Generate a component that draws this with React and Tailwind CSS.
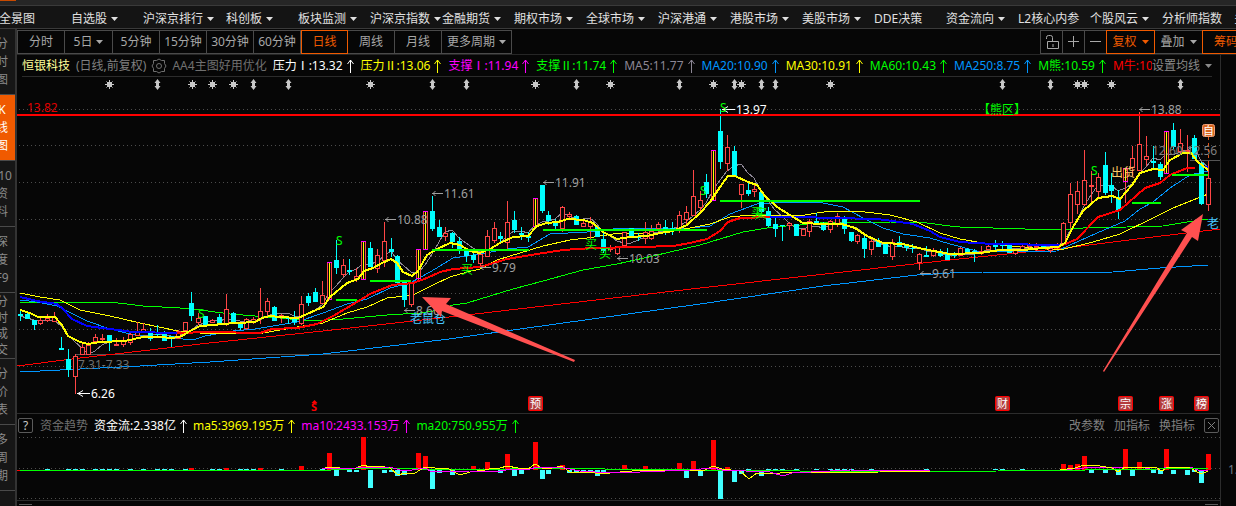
const MENU = [
  { label: '全景图' },
  { label: '自选股', more: true },
  { label: '沪深京排行', more: true, wide: true },
  { label: '科创板', more: true },
  { label: '板块监测', more: true },
  { label: '沪深京指数', more: true },
  { label: '金融期货', more: true },
  { label: '期权市场', more: true },
  { label: '全球市场', more: true },
  { label: '沪深港通', more: true },
  { label: '港股市场', more: true },
  { label: '美股市场', more: true },
  { label: 'DDE决策' },
  { label: '资金流向', more: true },
  { label: 'L2核心内参' },
  { label: '个股风云', more: true },
  { label: '分析师指数' },
  { label: '多空资金' },
]

const PERIODS = [
  { label: '分时', width: 'w-[47px]' },
  { label: '5日', width: 'w-12', more: true },
  { label: '5分钟', width: 'w-[47px]' },
  { label: '15分钟', width: 'w-[47px]' },
  { label: '30分钟', width: 'w-[47px]' },
  { label: '60分钟', width: 'w-[47px]' },
  { label: '日线', width: 'w-[47px]', active: true },
  { label: '周线', width: 'w-[47px]' },
  { label: '月线', width: 'w-[47px]' },
  { label: '更多周期', width: 'w-[70px]', more: true },
]

const SIDE_TABS = [
  { chars: ['分', '时', '图'] },
  { chars: ['K', '线', '图'], active: true },
  { chars: ['F10', '资', '料'] },
  { chars: ['深', '度', 'F9'] },
  { chars: ['分', '时', '成', '交'] },
  { chars: ['分', '价', '表'] },
  { chars: ['多', '周', '期'] },
]

const INDICATORS = [
  { label: '压力Ⅰ:13.32', color: 'text-white' },
  { label: '压力Ⅱ:13.06', color: 'text-[#ffff00]' },
  { label: '支撑Ⅰ:11.94', color: 'text-[#ff00ff]' },
  { label: '支撑Ⅱ:11.74', color: 'text-[#00ff00]' },
  { label: 'MA5:11.77', color: 'text-[#8c8694]' },
  { label: 'MA20:10.90', color: 'text-[#0096ff]' },
  { label: 'MA30:10.91', color: 'text-[#ffff00]' },
  { label: 'MA60:10.43', color: 'text-[#00ff00]' },
  { label: 'MA250:8.75', color: 'text-[#0096ff]' },
  { label: 'M熊:10.59', color: 'text-[#00ff00]' },
  { label: 'M牛:10.82', color: 'text-[#ff0000]' },
]

const FLOW_INDICATORS = [
  { label: '资金流:2.338亿', color: 'text-white' },
  { label: 'ma5:3969.195万', color: 'text-[#ffff00]' },
  { label: 'ma10:2433.153万', color: 'text-[#ff00ff]' },
  { label: 'ma20:750.955万', color: 'text-[#00ff00]' },
]

// kind, high, body top, body bottom, low. c = down, r = up, m = limit up
const CANDLES = `
c 310 314 316 321|c 313 314 319 319|c 320 320 325 330|r 318 320 324 325|r 314 318 321 322|r 312 317 322 322
c 337 348 350 350|c 349 359 370 377|r 354 356 377 394|r 343 347 355 355|r 342 345 355 355|r 334 337 342 342
r 334 338 340 341|c 335 335 342 351|r 338 344 346 346|r 337 341 345 347|r 331 334 343 345|r 322 331 336 336
r 323 329 333 333|c 328 331 339 341|c 325 334 335 338|c 331 334 341 341|c 336 336 338 347|r 330 331 339 339
r 322 322 331 331|c 292 303 316 321|r 313 318 323 325|c 316 316 326 326|r 319 320 323 323|c 314 317 324 324
r 294 309 324 326|c 312 313 323 323|c 323 323 328 330|r 318 319 329 330|r 317 319 323 324|r 288 311 319 324
r 298 301 312 315|c 306 307 321 321|r 314 315 317 323|c 317 317 319 324|c 311 319 322 325|r 296 304 324 325
c 293 296 303 306|c 288 292 302 302|r 281 295 304 304|m 262 262 300 300|c 240 260 268 274|r 259 265 275 277
c 259 270 272 275|r 268 276 279 282|m 241 241 280 280|c 242 248 267 267|r 249 255 269 273|r 222 241 261 267
c 238 249 252 257|c 255 256 283 283|c 281 281 300 307|r 282 283 305 307|m 249 249 279 282|m 211 211 250 250
c 196 211 229 231|c 220 227 237 237|r 227 233 237 241|c 232 233 242 248|c 237 241 249 254|c 250 251 256 262
c 253 255 260 263|r 250 254 264 267|r 230 236 257 257|r 222 228 241 243|c 232 236 239 243|r 201 222 243 249
c 211 220 230 233|c 227 233 235 240|c 232 236 238 242|m 198 198 227 227|c 185 185 211 213|c 211 215 221 225
c 219 222 226 229|r 206 207 229 232|r 212 214 217 218|c 215 216 225 225|r 219 223 227 227|r 217 222 227 239
c 227 227 237 237|c 230 239 251 253|r 245 248 250 252|r 246 246 254 255|r 232 232 246 247|c 228 228 236 236
c 233 236 238 241|r 222 232 239 244|r 225 231 239 240|r 222 224 229 233|c 220 227 229 235|c 222 228 229 235
r 211 215 229 233|r 206 212 220 224|r 170 196 216 216|r 191 200 208 213|c 174 182 194 198|m 150 150 201 201
c 109 131 162 169|r 135 147 164 171|c 146 151 176 176|r 184 184 195 208|c 183 190 194 196|r 185 189 192 197
c 190 192 212 213|c 207 211 226 227|c 218 224 229 237|c 225 225 226 241|r 222 223 226 230|c 224 224 236 236
r 228 229 236 236|r 219 221 232 237|c 213 221 223 224|c 222 223 230 231|r 220 221 230 233|r 213 216 224 227
c 216 218 229 234|c 232 232 241 242|r 234 235 242 244|c 236 238 249 258|r 239 241 250 255|c 238 241 247 247
c 243 243 254 254|r 239 242 257 260|c 236 242 247 247|c 244 245 248 251|c 244 248 249 253|r 253 254 263 270
c 246 255 257 257|r 248 250 256 257|c 249 251 256 257|c 248 253 260 260|c 252 254 256 258|r 247 248 256 256
c 248 249 252 252|c 249 251 253 262|r 246 251 254 255|r 245 246 250 250|c 240 245 247 251|c 241 244 246 251
c 245 245 253 253|r 248 249 254 255|r 245 246 251 251|r 243 244 247 248|r 243 246 248 251|c 244 245 248 248
r 246 248 251 253|r 243 244 248 249|r 222 223 245 245|r 183 194 223 228|r 181 191 205 214|r 150 180 205 206
r 171 185 187 205|r 173 177 192 197|c 152 165 193 195|c 173 185 191 203|c 190 197 210 219|m 168 168 182 203
r 146 158 168 176|r 112 144 171 171|r 136 156 160 166|c 146 161 163 168|c 162 164 177 180|m 131 131 174 174
c 123 130 147 149|r 129 143 152 153|r 135 150 152 172|c 135 138 159 159|c 162 163 204 205|r 161 178 205 211`
  .trim()
  .split(/[|\n]/)
  .map((row) => {
    const [kind, ...v] = row.split(' ')
    const [high, top, bottom, low] = v.map(Number)
    return { kind, high, top, bottom, low }
  })

const LINES = [
  // M牛
  { color: '#ff0000', width: 1, points: '17,366 80,358 150,350 200,344 323,331 449,317 700,288 950,260 1073,247 1153,237 1220,229' },
  // MA250
  { color: '#0096ff', width: 1, points: '20,372 140,366 210,362 323,354 449,339 520,329 700,304 823,286 917,275 950,273 983,272 1040,272 1067,273 1113,272 1160,268 1208,265' },
  // MA60
  { color: '#00ff00', width: 1, points: '20,302 110,302 143,306 180,308 200,310 230,314 280,318 310,321 343,319 387,315 420,313 433,311 453,305 467,303 490,296 513,289 543,281 583,270 617,264 653,256 700,245 710,242 743,232 773,227 800,225 830,222 890,222 927,223 950,226 960,227 993,228 1057,230 1083,228 1127,227 1163,226 1187,222 1208,219' },
  // MA20
  { color: '#0096ff', width: 1, points: '20,300 37,302 57,306 67,311 87,321 110,329 130,334 150,337 173,338 193,340 205,336 233,331 255,329 267,327 297,322 323,313 347,304 367,299 390,288 410,283 430,272 440,266 453,258 480,254 507,249 528,247 550,234 587,232 613,229 640,228 690,228 710,226 730,214 757,204 787,202 818,202 843,207 863,218 883,228 903,234 930,238 950,244 977,251 1007,252 1057,251 1070,245 1097,233 1125,221 1140,209 1153,202 1170,188 1190,175 1208,171' },
  // MA30
  { color: '#ffff00', width: 1, points: '20,293 40,297 60,300 80,310 110,316 140,323 178,331 200,333 263,333 297,327 323,323 347,313 367,307 387,298 413,295 433,285 450,277 467,272 480,269 497,260 520,253 543,246 570,240 587,238 620,233 653,234 690,228 710,224 730,217 750,215 805,215 830,211 857,211 890,215 917,222 940,233 960,239 983,243 1020,247 1060,250 1093,242 1120,234 1153,218 1173,208 1208,194' },
]

const TREND_LINES = [
  { color: '#0000ff', width: 2, points: '20,297 37,301 57,304 63,309 72,319 87,326 110,329 133,332 177,333' },
  { color: '#ff0000', width: 2, points: '177,333 210,332 260,333 272,329 297,328 317,324 333,316 357,302 370,294 392,285 413,283 427,278 440,272 453,269 480,267 507,259 537,254 563,250 593,248 640,247 673,246 690,243 707,239 720,231 728,222 740,218 770,217' },
  { color: '#0000ff', width: 2, points: '770,217 800,217 833,218 877,219 893,221 913,224 930,231 940,237 960,242 993,244 1063,245' },
  { color: '#ff0000', width: 2, points: '1063,245 1077,239 1098,217 1120,210 1145,188 1160,183 1170,175 1187,168 1195,168' },
  { color: '#0000ff', width: 2, points: '1203,167 1208,167' },
  { color: '#ffff00', width: 2, points: '20,310 30,313 38,317 55,317 62,325 68,336 80,342 88,344 100,342 125,341 143,337 158,337 173,338 182,336 190,331 200,326 215,325 220,324 255,322 262,318 270,316 280,317 298,318 307,314 323,307 330,297 347,283 358,279 364,271 373,268 382,263 391,259 397,263 403,272 412,276 418,271 427,255 437,249 450,243 460,245 470,251 480,253 490,249 500,243 513,237 528,236 537,226 547,223 558,222 568,219 583,220 593,223 603,232 617,239 630,237 647,236 660,233 673,231 687,225 700,213 710,202 720,187 728,176 735,176 748,182 757,185 765,196 777,207 790,215 803,223 823,224 842,224 855,228 867,236 883,243 903,244 923,249 950,254 980,253 1000,250 1023,250 1043,248 1058,247 1065,243 1073,227 1083,211 1098,198 1112,196 1120,199 1132,185 1140,173 1153,169 1163,170 1170,160 1183,153 1191,153 1197,161 1208,170' },
]

const SUPPORTS = [
  [336, 357, 300], [370, 411, 281], [432, 529, 250], [543, 707, 230],
  [720, 920, 201], [1132, 1161, 203], [1172, 1208, 175],
]

const PRICE_TAGS = [
  { x: 77, y: 394, text: '6.26', bright: true },
  { x: 385, y: 220, text: '10.88' },
  { x: 432, y: 194, text: '11.61' },
  { x: 404, y: 311, text: '8.60' },
  { x: 480, y: 268, text: '9.79' },
  { x: 543, y: 183, text: '11.91' },
  { x: 617, y: 259, text: '10.03' },
  { x: 722, y: 110, text: '13.97', bright: true },
  { x: 920, y: 274, text: '9.61' },
  { x: 1139, y: 110, text: '13.88' },
]

const SIGNALS = [
  { x: 336, y: 245, text: 'S' }, { x: 720, y: 112, text: 'S' }, { x: 700, y: 195, text: 'S' },
  { x: 1091, y: 175, text: 'S' }, { x: 198, y: 318, text: 'S' },
  { x: 461, y: 274, text: '买' }, { x: 585, y: 249, text: '买' }, { x: 599, y: 258, text: '买' },
  { x: 751, y: 217, text: '买' }, { x: 755, y: 218, text: '买' },
]

const STARS = [109, 192, 212, 233, 370, 535, 610, 713, 741, 830, 1077, 1084, 1111]
const DIAMONDS = [157, 253, 288, 432, 466, 576, 679, 734, 761, 775, 1002, 1050, 1180]

const BADGES = [
  { x: 535, text: '预' }, { x: 1002, text: '财' }, { x: 1125, text: '宗' },
  { x: 1166, text: '涨' }, { x: 1201, text: '榜' },
]

// candle index -> y of the bar's far end, measured against the zero line at 470
const FLOW_BARS = {
  25: 468, 30: 468, 35: 468, 41: 466, 45: 453, 46: 476, 48: 472, 49: 472, 50: 437, 51: 488, 53: 473, 54: 472, 55: 476, 56: 475,
  58: 453, 59: 456, 60: 489, 61: 473, 63: 475, 66: 466, 68: 462, 70: 473, 71: 454, 72: 476, 73: 474, 75: 442, 76: 479, 77: 474,
  79: 465, 80: 473, 81: 473, 82: 473, 83: 473, 84: 476, 85: 473, 88: 465, 91: 466, 96: 463, 97: 478, 98: 461, 99: 476,
  101: 440, 102: 499, 103: 467, 104: 482, 105: 474, 108: 476, 152: 464, 153: 465, 154: 464, 155: 456, 156: 473, 158: 473,
  160: 475, 161: 449, 162: 476, 163: 462, 165: 473, 166: 474, 167: 449, 168: 474, 170: 475, 171: 472, 172: 483, 173: 454,
}
const FLAT_BARS = [4, 7, 8, 9, 11, 12, 13, 14, 16, 18, 20, 21, 22, 24, 28, 29, 32, 33, 34, 38, 44, 106, 109, 110, 111, 113, 116, 118, 119, 120, 121, 124, 132, 142, 143, 146]

const FLOW_LINES = [
  { color: '#ffff00', points: '322,469 329,467 340,468 356,468 363,465 370,467 380,466 390,468 398,475 405,473 415,473 425,467 435,468 447,468 460,475 470,472 485,470 493,468 500,468 507,466 518,468 528,469 535,464 542,468 552,468 562,466 570,472 590,472 600,474 620,472 645,470 705,470 713,466 722,469 740,471 749,479 757,473 765,474 780,473 880,472 896,471 930,471' },
  { color: '#ff00ff', points: '322,469 390,467 400,470 412,470 425,468 432,472 470,471 500,471 512,469 530,469 537,467 565,468 580,471 610,473 640,472 690,470 713,468 722,470 770,472 783,476 792,473 830,471 850,470 930,471 998,471 1060,470 1084,468 1112,467 1140,467 1155,470 1168,467 1190,467 1201,471 1208,470' },
  { color: '#ffff00', points: '1060,470 1075,468 1084,465 1100,466 1112,468 1118,472 1125,467 1155,467 1162,471 1168,467 1190,468 1201,474 1208,471' },
]

const candleX = (i) => Math.floor(20.3 + i * 6.866)

const closeOf = (c) => (c.kind === 'c' ? c.bottom : c.top)

const MA5 = CANDLES.map((_, i) => {
  const part = CANDLES.slice(Math.max(0, i - 4), i + 1)
  const avg = part.reduce((sum, c) => sum + closeOf(c), 0) / part.length
  return `${candleX(i)},${Math.round(avg)}`
}).join(' ')

function Caret() {
  return (
    <svg width="7" height="4" viewBox="0 0 7 4" className="shrink-0" fill="currentColor" aria-hidden="true">
      <path d="M0 0h7L3.5 4z" />
    </svg>
  )
}

function UpArrow() {
  return (
    <svg width="7" height="14" viewBox="0 0 7 14" className="shrink-0" fill="none" stroke="currentColor" aria-hidden="true">
      <path d="M3.5 14V1M.5 5l3-4 3 4" />
    </svg>
  )
}

function Indicator({ label, color }) {
  return (
    <span className={`flex shrink-0 items-center gap-1 ${color}`}>
      {label}
      <UpArrow />
    </span>
  )
}

function MenuBar() {
  return (
    <nav className="-ml-px flex h-[23px] items-center overflow-hidden border-b border-[#3a3a3a] bg-[#141414] text-[#e0e0e0]">
      {MENU.map((item) => (
        <button
          key={item.label}
          type="button"
          className={`flex h-full shrink-0 items-center gap-1 pt-1 ${item.wide ? 'w-[83px]' : 'w-[72px]'}`}
        >
          {item.label}
          {item.more && <Caret />}
        </button>
      ))}
    </nav>
  )
}

function SideTabs() {
  return (
    <aside className="w-[17px] shrink-0 overflow-hidden border-r-2 border-[#333333] bg-[#161616]">
      {SIDE_TABS.map((tab) => (
        <button
          key={tab.chars.join('')}
          type="button"
          className={`-ml-3 flex h-[66px] w-7 flex-col items-center justify-center border-b border-[#4a4a4a] ${
            tab.chars.length > 3 ? 'leading-4' : 'leading-[18px]'
          } ${tab.active ? 'bg-[#f05a00] text-white' : 'text-[#8a8a8a]'}`}
        >
          {tab.chars.map((char) => (
            <span key={char}>{char}</span>
          ))}
        </button>
      ))}
    </aside>
  )
}

function Toolbar() {
  return (
    <div className="flex h-[26px] items-center justify-between border-b border-[#262626] text-[#a8a8a8]">
      <div className="flex h-6 shrink-0 border-l border-[#4a4a4a]">
        {PERIODS.map((p) => (
          <button
            key={p.label}
            type="button"
            className={`flex items-center justify-center gap-1 ${p.width} ${
              p.active
                ? 'border border-[#f05a00] text-[#f05a00]'
                : 'border-y border-r border-[#4a4a4a]'
            }`}
          >
            {p.label}
            {p.more && <Caret />}
          </button>
        ))}
      </div>
      <div className="flex h-6 shrink-0 border-l border-[#4a4a4a]">
        <button type="button" aria-label="解锁" className="flex w-[22px] items-center justify-center border-y border-r border-[#4a4a4a]">
          <svg width="14" height="16" viewBox="0 0 14 16" fill="none" stroke="currentColor">
            <path d="M2.5 7.5h11v7h-11zM8 10v3M1.500 5V3.500q0-2 2-2h2q2 0 2 2v4" />
          </svg>
        </button>
        <button type="button" aria-label="放大" className="flex w-[22px] items-center justify-center border-y border-r border-[#4a4a4a]">
          <svg width="11" height="11" viewBox="0 0 11 11" stroke="currentColor">
            <path d="M0 5.500h11M5.500 0v11" />
          </svg>
        </button>
        <button type="button" aria-label="缩小" className="flex w-[21px] items-center justify-center border-y border-[#4a4a4a]">
          <svg width="11" height="11" viewBox="0 0 11 11" stroke="currentColor">
            <path d="M0 5.500h11" />
          </svg>
        </button>
        <button type="button" className="flex w-[49px] items-center justify-center gap-[5px] border border-[#f05a00] text-[#f05a00]">
          复权
          <Caret />
        </button>
        <button type="button" className="flex w-[47px] items-center justify-center gap-[5px] border-y border-[#4a4a4a]">
          叠加
          <Caret />
        </button>
        <button type="button" className="flex w-[34px] items-center overflow-hidden border-y border-l border-[#f05a00] pl-[11px] text-[#f05a00]">
          筹码
        </button>
      </div>
    </div>
  )
}

function InfoRow() {
  return (
    <div className="mr-2 ml-[5px] flex h-[22px] items-center border-b border-[#2c2c2c]">
      <span className="shrink-0 text-[#ffff9b]">恒银科技</span>
      <span className="ml-[6px] shrink-0 text-[#808080]">(日线,前复权)</span>
      <button type="button" aria-label="指标设置" className="ml-[5px] shrink-0 text-[#707070]">
        <svg width="16" height="16" viewBox="0 0 16 16" fill="none" stroke="currentColor">
          <circle cx="8" cy="8" r="2.500" />
          <path d="M5.500 2.500 8 1l2.500 1.500h3v3L15 8l-1.500 2.500v3h-3L8 15l-2.500-1.500h-3v-3L1 8l1.500-2.500v-3z" />
        </svg>
      </button>
      <span className="ml-[5px] shrink-0 text-[#707070]">AA4主图好用优化</span>
      <div className="ml-[6px] flex min-w-0 flex-1 gap-[7px] overflow-hidden">
        {INDICATORS.map((item) => (
          <Indicator key={item.label} {...item} />
        ))}
      </div>
      <button type="button" className="flex shrink-0 items-center gap-[5px] text-[#8a8a8a]">
        设置均线
        <Caret />
      </button>
    </div>
  )
}

function Candle({ candle, x }) {
  const { kind, high, top, bottom, low } = candle
  if (kind === 'c') {
    return (
      <g fill="#00ffff">
        <rect x={x} y={high} width="1" height={low - high} />
        <rect x={x - 2} y={top} width="5" height={bottom - top} />
      </g>
    )
  }
  return (
    <g fill="#ff4646">
      <rect x={x} y={high} width="1" height={top - high} />
      <rect x={x} y={bottom} width="1" height={low - bottom} />
      <rect x={x - 2} y={top} width="5" height={bottom - top} />
      {bottom - top > 2 && <rect x={x - 1} y={top + 1} width="3" height={bottom - top - 2} fill="#060606" />}
      {kind === 'm' && (
        <>
          <rect x={x} y={top + 1} width="1" height={bottom - top - 2} fill="#ffff00" />
          <rect x={x - 2} y={top} width="5" height="1" fill="#ff00ff" />
          <rect x={x - 2} y={bottom - 1} width="5" height="1" fill="#ff00ff" />
        </>
      )}
    </g>
  )
}

function PriceTag({ x, y, text, bright }) {
  const color = bright ? '#ffffff' : '#a0a0a0'
  const length = bright ? 13 : 11
  const head = bright ? `M${x + 6} ${y - 3.5}l-5 3 5 3` : `M${x + 3.5} ${y - 3}l-2.500 2.500 2.500 2.500`
  return (
    <g>
      <path d={`M${x} ${y - 0.5}h${length}${head}`} fill="none" stroke={color} />
      <text x={x + length + 1} y={y + 4} fill={color}>{text}</text>
    </g>
  )
}

function KLineChart() {
  return (
    <svg viewBox="17 77 1203 336" className="block h-auto w-full text-xs" role="img" aria-label="恒银科技日线">
      <g stroke="#4c4c4c" strokeDasharray="1 3" shapeRendering="crispEdges">
        {[109, 145, 182, 219, 256, 293, 329, 366].map((y) => (
          <line key={y} x1="19" x2="1220" y1={y + 0.5} y2={y + 0.5} />
        ))}
      </g>

      <g fill="#c8c8c8">
        {STARS.map((x) => (
          <path key={x} d={`M${x - 2} 82h5v5h-5z`} />
        ))}
        {DIAMONDS.map((x) => (
          <path key={x} d={`M${x + 0.5} 79l3 4h-1.500v3h1.500l-3 4-3-4h1.500v-3h-1.500z`} />
        ))}
      </g>
      <g stroke="#c8c8c8" fill="none">
        {STARS.map((x) => (
          <path key={x} d={`M${x + 0.5} 80v9M${x - 4} 84.500h9M${x - 2.5} 81.500l6 6M${x + 3.500} 81.500l-6 6`} />
        ))}
      </g>

      <g fill="none" shapeRendering="crispEdges">
        <path d="M75 354.500H1220M1190 160.500h30" stroke="#555555" />
        {LINES.map((line) => (
          <polyline key={line.points} points={line.points} stroke={line.color} strokeWidth={line.width} />
        ))}
        <polyline points={MA5} stroke="#8c8694" />
      </g>

      <g shapeRendering="crispEdges">
        {CANDLES.map((candle, i) => (
          <Candle key={i} candle={candle} x={candleX(i)} />
        ))}
      </g>

      <g fill="none" shapeRendering="crispEdges">
        {TREND_LINES.map((line) => (
          <polyline key={line.points} points={line.points} stroke={line.color} strokeWidth={line.width} />
        ))}
        {SUPPORTS.map(([x1, x2, y]) => (
          <line key={x1} x1={x1} x2={x2} y1={y} y2={y} stroke="#00ff00" strokeWidth="2" />
        ))}
        <line x1="17" x2="1220" y1="115" y2="115" stroke="#ff0000" strokeWidth="2" />
      </g>

      <text x="27" y="112" fill="#e00000">13.82</text>
      <text x="78" y="369" fill="#707070">7.31-7.33</text>
      <text x="1152" y="155" fill="#808080">12.60-12.56</text>
      {PRICE_TAGS.map((tag) => (
        <PriceTag key={tag.text} {...tag} />
      ))}

      <g fill="#00ff00">
        {SIGNALS.map((s) => (
          <text key={`${s.x}-${s.y}`} x={s.x} y={s.y}>{s.text}</text>
        ))}
        <text x="978" y="114">【熊区】</text>
      </g>
      <text x="1111" y="177" fill="#ffc864">出货</text>
      <text x="410" y="323" fill="#46c8ff">老鼠仓</text>
      <text x="1207" y="228" fill="#46c8ff">老</text>
      <text x="311" y="411" fill="#ff0000" className="text-[11px] font-bold">S</text>
      <path d="M311.500 403l3-3 3 3z" fill="#ff0000" />

      <path d="M1208.500 137v42" stroke="#d8551c" strokeDasharray="3 3" />
      <rect x="1202.500" y="124.500" width="12" height="12" rx="2" fill="#d8641e" stroke="#f0a078" />
      <text x="1203" y="135" fill="#ffffff" className="text-[11px]">自</text>

      {BADGES.map((b) => (
        <g key={b.text}>
          <rect x={b.x - 6.500} y="396.500" width="14" height="14" rx="1" fill="#b43c3c" stroke="#ff0000" />
          <text x={b.x - 5} y="408" fill="#ffffff" className="text-[11px]">{b.text}</text>
        </g>
      ))}

      <g fill="#ff5050">
        <path d="M422 297l29 1-5 6 129 56-1 2-132-51-1 6z" />
        <path d="M1203 214l-22 16 6 3-84 138 1 1 88-135 6 4z" />
      </g>
    </svg>
  )
}

function FlowHeader() {
  return (
    <div className="flex h-[23px] items-center justify-between border-t border-[#2c2c2c] pt-px pr-px pl-px">
      <div className="flex items-center">
        <button type="button" aria-label="帮助" className="flex h-[15px] w-[15px] items-center justify-center rounded-xs border border-[#5a5a5a] text-[#c8c8c8]">
          ?
        </button>
        <span className="ml-[7px] text-[#707070]">资金趋势</span>
        <div className="ml-[6px] flex gap-[6px]">
          {FLOW_INDICATORS.map((item) => (
            <Indicator key={item.label} {...item} />
          ))}
        </div>
      </div>
      <div className="flex items-center gap-[9px] text-[#808080]">
        <button type="button">改参数</button>
        <button type="button">加指标</button>
        <button type="button">换指标</button>
        <button type="button" aria-label="关闭" className="flex h-[15px] w-[15px] items-center justify-center rounded-xs border border-[#5a5a5a]">
          <svg width="7" height="7" viewBox="0 0 7 7" stroke="currentColor">
            <path d="M0 0l7 7M7 0L0 7" />
          </svg>
        </button>
      </div>
    </div>
  )
}

function FlowChart() {
  return (
    <svg viewBox="17 436 1203 64" className="block h-auto w-full" role="img" aria-label="资金趋势" shapeRendering="crispEdges">
      <g stroke="#4c4c4c" strokeDasharray="1 3">
        {[437, 468, 498].map((y) => (
          <line key={y} x1="19" x2="1220" y1={y + 0.5} y2={y + 0.5} />
        ))}
      </g>
      {FLAT_BARS.map((i) => (
        <rect key={i} x={candleX(i) - 2} y="469" width="5" height="1" fill="#40ffff" />
      ))}
      {Object.entries(FLOW_BARS).map(([i, y]) => (
        <rect
          key={i}
          x={candleX(Number(i)) - 2}
          y={Math.min(y, 470)}
          width="5"
          height={Math.abs(y - 470)}
          fill={y < 470 ? '#ff0000' : '#40ffff'}
        />
      ))}
      <g fill="none">
        <path d="M20 470.500H320L363 468.500h54l8 1h65l40-1h60l30 1h60l30 1h60l60 1h166M998 470.500h62l50-1 98-1" stroke="#00ff00" />
        {FLOW_LINES.map((line) => (
          <polyline key={line.points} points={line.points} stroke={line.color} />
        ))}
        <path d="M998 470.500h62l50-1 98-1" stroke="#00ff00" />
        <path d="M17 470.500h3" stroke="#ff0000" />
      </g>
    </svg>
  )
}

export default function App() {
  return (
    <div className="flex min-h-screen flex-col overflow-hidden bg-[#060606] font-['Noto_Sans','Noto_Sans_CJK_SC',sans-serif] text-xs leading-4 whitespace-nowrap">
      <div className="h-[6px] border-b border-[#3a3a3a] bg-[#262626]">
        <div className="h-px w-4 bg-[#c84a00]" />
      </div>
      <MenuBar />
      <div className="flex flex-1">
        <SideTabs />
        <main className="flex min-w-0 flex-1 flex-col">
          <Toolbar />
          <div className="flex flex-1">
            <div className="flex min-w-0 flex-1 flex-col">
              <InfoRow />
              <KLineChart />
              <FlowHeader />
              <FlowChart />
              <div className="flex flex-1 items-end justify-between border-t border-[#2c2c2c] px-[2px]">
                <span className="h-[2px] w-[13px] border-t border-[#5a5a5a]" />
                <span className="h-[2px] w-[13px] border-t border-[#5a5a5a]" />
              </div>
            </div>
            <div className="flex w-4 shrink-0 flex-col justify-end overflow-hidden border-l border-[#2c2c2c] pb-7 pl-[7px] text-[#707884]">
              1.50
            </div>
          </div>
        </main>
      </div>
    </div>
  )
}
